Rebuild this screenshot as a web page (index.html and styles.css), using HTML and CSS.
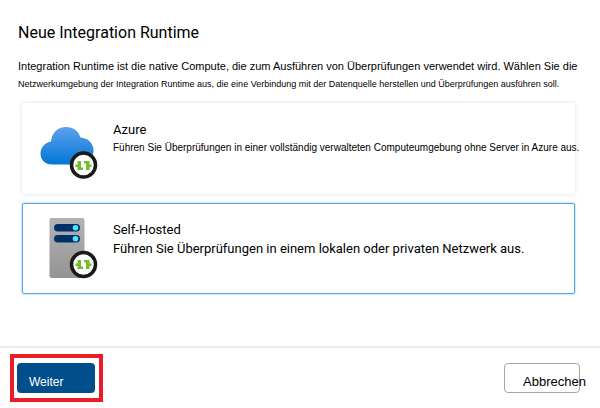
FILE: index.html
```
<!DOCTYPE html>
<html lang="de">
<head>
    <meta charset="UTF-8">
    <meta name="viewport" content="width=device-width, initial-scale=1.0">
    <title>Neue Integration Runtime</title>
    <link rel="stylesheet" href="styles.css">
</head>
<body>
    <form class="panel">
        <main class="content">
            <h1>Neue Integration Runtime</h1>
            <p class="intro">Integration Runtime ist die native Compute, die zum Ausführen von Überprüfungen verwendet wird. Wählen Sie die</p>
            <p class="intro-small">Netzwerkumgebung der Integration Runtime aus, die eine Verbindung mit der Datenquelle herstellen und Überprüfungen ausführen soll.</p>

            <div class="options">
                <label class="option">
                    <input type="radio" name="runtime" value="azure">
                    <svg class="option-icon" viewBox="0 0 64 64" aria-hidden="true">
                        <defs>
                            <linearGradient id="cloud" x1="0" y1="0" x2="0" y2="1">
                                <stop offset="0" stop-color="#5ea0ef"/>
                                <stop offset="1" stop-color="#0078d4"/>
                            </linearGradient>
                        </defs>
                        <path fill="url(#cloud)" d="M15 46.500C8.500 46.500 3.500 42 3.500 35.500C3.500 29.500 8 24.500 14 23.500C14.500 15 21 9 29 9C36 9 41.500 13 43.500 19.500C51 20 56.500 25 56.500 32.500C56.500 40 51 46.500 43.500 46.500Z"/>
                        <circle cx="46.500" cy="47" r="12" fill="#fff" stroke="#1b1a19" stroke-width="3.500"/>
                        <path fill="#76bc2d" d="M40.500 43h3.500v6.500h2v2.500h-5.500v-3h-2v-2.500h2zM47 43h5.500v3.500h2v2.500h-2v3h-3.500v-6.500h-2z"/>
                    </svg>
                    <span class="option-text">
                        <span class="option-name">Azure</span>
                        <span class="option-note">Führen Sie Überprüfungen in einer vollständig verwalteten Computeumgebung ohne Server in Azure aus.</span>
                    </span>
                </label>

                <label class="option">
                    <input type="radio" name="runtime" value="self-hosted" checked>
                    <svg class="option-icon" viewBox="0 0 64 64" aria-hidden="true">
                        <defs>
                            <linearGradient id="server" x1="0" y1="0" x2="0" y2="1">
                                <stop offset="0" stop-color="#b3b3b3"/>
                                <stop offset="1" stop-color="#949494"/>
                            </linearGradient>
                        </defs>
                        <rect x="12.500" y="0" width="35" height="60" rx="2" fill="url(#server)"/>
                        <rect x="17" y="6" width="26" height="7.500" rx="3.750" fill="#003067"/>
                        <rect x="17" y="17" width="26" height="7.500" rx="3.750" fill="#003067"/>
                        <circle cx="38.500" cy="9.750" r="2.800" fill="#50e6ff"/>
                        <circle cx="38.500" cy="20.750" r="2.800" fill="#50e6ff"/>
                        <circle cx="46.500" cy="46.500" r="12" fill="#fff" stroke="#1b1a19" stroke-width="3.500"/>
                        <path fill="#76bc2d" d="M40.500 42h3.500v6.500h2v2.500h-5.500v-3h-2v-2.500h2zM47 42h5.500v3.500h2v2.500h-2v3h-3.500v-6.500h-2z"/>
                    </svg>
                    <span class="option-text">
                        <span class="option-name">Self-Hosted</span>
                        <span class="option-note large">Führen Sie Überprüfungen in einem lokalen oder privaten Netzwerk aus.</span>
                    </span>
                </label>
            </div>
        </main>

        <footer class="actions">
            <div class="highlight">
                <button type="submit" class="btn primary">Weiter</button>
            </div>
            <button type="button" class="btn secondary">Abbrechen</button>
        </footer>
    </form>
</body>
</html>
```

FILE: styles.css
```
* { box-sizing: border-box; }
body {
    margin: 0;
    background: #fff;
    color: #000;
    font-family: "Liberation Sans", Arial, sans-serif;
}
h1 {
    margin: 0 0 13px;
    font-family: Roboto, Arial, sans-serif;
    font-size: 16px;
    line-height: 22px;
    font-weight: normal;
}
p { margin: 0; white-space: nowrap; }
.panel {
    display: flex;
    flex-direction: column;
    min-height: 100vh;
}
.content {
    flex: 1;
    padding: 22px 25px 0 18px;
}
.intro { font-size: 11px; line-height: 18px; }
.intro-small { font-size: 9px; line-height: 18px; }

.options {
    display: grid;
    grid-template-columns: minmax(0, 1fr);
    gap: 9px;
    margin: 10px 0 0 4px;
}
.option {
    position: relative;
    display: flex;
    gap: 12px;
    height: 91px;
    padding: 14px 0 0 14px;
    border: 1px solid transparent;
    border-radius: 2px;
    box-shadow: 0 0 4px rgba(0, 0, 0, 0.15);
    white-space: nowrap;
    cursor: pointer;
}
.option:has(input:checked) {
    border-color: #5ba7e0;
    box-shadow: 0 0 2px #5ba7e0;
}
.option input {
    position: absolute;
    opacity: 0;
    margin: 0;
}
.option-icon {
    flex: none;
    width: 64px;
    height: 64px;
}
.option-text {
    display: flex;
    flex-direction: column;
    padding-top: 3px;
}
.option-name {
    font-family: Roboto, Arial, sans-serif;
    font-size: 13px;
    line-height: 18px;
}
.option-note { font-size: 10px; line-height: 18px; }
.option-note.large {
    font-family: Roboto, Arial, sans-serif;
    font-size: 13px;
    line-height: 20px;
}

.actions {
    display: flex;
    justify-content: space-between;
    align-items: flex-start;
    padding: 6px 20px 6px 10px;
    border-top: 2px solid #eaeaea;
}
.highlight {
    padding: 5px 4px 5px 3px;
    border: 4px solid #ec1c24;
}
.btn {
    display: block;
    height: 30px;
    padding: 8px 0 0;
    border-radius: 4px;
    font-family: inherit;
    text-align: left;
    white-space: nowrap;
    cursor: pointer;
}
.primary {
    width: 78px;
    padding-left: 12px;
    border: 0;
    background: #004e8c;
    color: #fff;
    font-size: 12px;
}
.secondary {
    width: 76px;
    margin-top: 9px;
    padding-top: 6px;
    padding-left: 18px;
    border: 1px solid #a6a6a6;
    background: #fff;
    color: #000;
    font-size: 13px;
}
```
